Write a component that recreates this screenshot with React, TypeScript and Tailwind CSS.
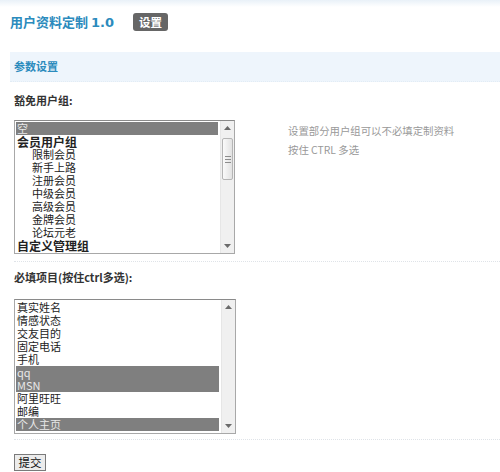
import React from "react";

type Opt = { label: string; group?: boolean; indent?: boolean; selected?: boolean };

const groups: Opt[] = [
  { label: "空", selected: true },
  { label: "会员用户组", group: true },
  { label: "限制会员", indent: true },
  { label: "新手上路", indent: true },
  { label: "注册会员", indent: true },
  { label: "中级会员", indent: true },
  { label: "高级会员", indent: true },
  { label: "金牌会员", indent: true },
  { label: "论坛元老", indent: true },
  { label: "自定义管理组", group: true },
];

const fields: Opt[] = [
  { label: "真实姓名" },
  { label: "情感状态" },
  { label: "交友目的" },
  { label: "固定电话" },
  { label: "手机" },
  { label: "qq", selected: true },
  { label: "MSN", selected: true },
  { label: "阿里旺旺" },
  { label: "邮编" },
  { label: "个人主页", selected: true },
];

const font = { fontFamily: '"Noto Sans CJK SC", "DejaVu Sans", sans-serif' };

function Arrow({ up }: { up?: boolean }) {
  return (
    <div className="h-[14px] flex items-center justify-center">
      <svg width="7" height="4" viewBox="0 0 7 4">
        {up ? <path d="M0 4 L3.5 0 L7 4 Z" fill="#6b6b6b" /> : <path d="M0 0 L3.5 4 L7 0 Z" fill="#6b6b6b" />}
      </svg>
    </div>
  );
}

function ScrollBar({ thumb }: { thumb?: boolean }) {
  return (
    <div className="w-[14px] h-full flex flex-col bg-[#f0f0f0] border-l border-[#e6e6e6]">
      <Arrow up />
      <div className="flex-1 relative">
        {thumb && (
          <div className="absolute left-[1px] right-[1px] top-[3px] h-[42px] rounded-[2px] border border-[#b5b5b5] bg-gradient-to-r from-[#fafafa] to-[#e2e2e2] flex flex-col items-center justify-center gap-[2px]">
            <div className="w-[6px] h-px bg-[#8c8c8c]" />
            <div className="w-[6px] h-px bg-[#8c8c8c]" />
            <div className="w-[6px] h-px bg-[#8c8c8c]" />
          </div>
        )}
      </div>
      <Arrow />
    </div>
  );
}

function ListBox({ items, width, height, thumb }: { items: Opt[]; width: number; height: number; thumb?: boolean }) {
  return (
    <div
      className="flex border border-[#a8a8a8] border-t-[#8a8a8a] bg-white overflow-hidden"
      style={{ width, height }}
    >
      <div className="flex-1 pl-px pr-[2px] pt-px overflow-hidden">
        {items.map((o) => (
          <div
            key={o.label}
            className={`h-[13px] leading-[13px] whitespace-nowrap ${
              o.selected ? "bg-[#7f7f7f] text-[#e8e8e8]" : "text-[#222]"
            } ${o.group ? "font-bold text-[12px]" : "text-[11px]"} ${o.indent ? "pl-[16px]" : "pl-px"}`}
          >
            {o.label}
          </div>
        ))}
      </div>
      <ScrollBar thumb={thumb} />
    </div>
  );
}

export default function App() {
  return (
    <div className="w-[500px] h-[472px] bg-white overflow-hidden" style={font}>
      <div className="h-[7px] bg-gradient-to-b from-[#e9f1f8] to-white" />
      <div className="mt-[6px] h-[18px] pl-[10px] flex items-center">
        <span className="text-[13px] font-bold text-[#2b8bbd] leading-none">
          用户资料定制 <span style={{ fontFamily: '"DejaVu Sans", sans-serif' }}>1.0</span>
        </span>
        <span className="ml-[19px] h-[18px] px-[6px] rounded-[3px] bg-[#666] text-white text-[11.5px] font-bold leading-[18px]">
          设置
        </span>
      </div>

      <div className="mt-[21px] ml-[10px] h-[30px] bg-[#eef5fc] border-b border-dotted border-[#e2ecf5] pl-[4px] flex items-center">
        <span className="text-[11px] font-bold text-[#2b8bbd]">参数设置</span>
      </div>

      <div className="ml-[14px] mt-[11px] h-[14px] leading-[14px] text-[11px] font-bold text-[#333]">豁免用户组:</div>

      <div className="ml-[14px] mt-[13px] flex">
        <ListBox items={groups} width={221} height={134} thumb />
        <div className="ml-[53px] mt-[1px] text-[10.4px] leading-[19px] text-[#999]">
          <div>设置部分用户组可以不必填定制资料</div>
          <div>按住 CTRL 多选</div>
        </div>
      </div>

      <div className="ml-[14px] mt-[7px] border-t border-dotted border-[#dfe3e8]" />

      <div className="ml-[14px] mt-[8px] h-[14px] leading-[14px] text-[11px] font-bold text-[#333]">
        必填项目(按住ctrl多选):
      </div>

      <div className="ml-[14px] mt-[15px]">
        <ListBox items={fields} width={222} height={135} />
      </div>

      <div className="ml-[14px] mt-[5px] border-t border-dotted border-[#dfe3e8]" />

      <div className="ml-[14px] mt-[8px]">
        <button className="w-[32px] h-[17px] border border-[#7a7a7a] bg-[#ececec] text-[11.5px] leading-[15px] text-[#111] p-0">
          提交
        </button>
      </div>
    </div>
  );
}
